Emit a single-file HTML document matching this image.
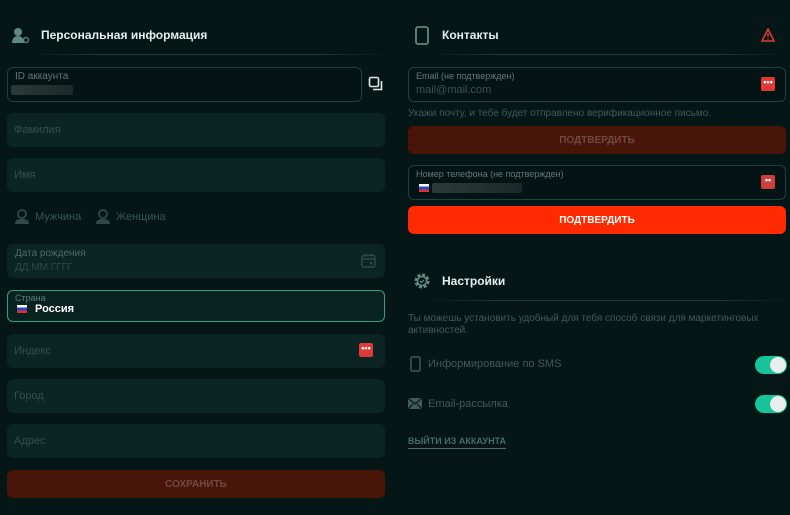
<!DOCTYPE html>
<html><head><meta charset="utf-8"><style>
*{box-sizing:border-box;margin:0;padding:0}
body{width:790px;height:515px;background:#051617;font-family:"Liberation Sans",sans-serif;position:relative;overflow:hidden;color:#5d7a76}
.a{position:absolute}
.f{position:absolute;background:#0a2523;border-radius:6px;font-size:11px;color:#34504c;padding-left:7px;display:flex;align-items:center}
.o{position:absolute;border:1px solid #23403c;border-radius:6px;background:#041313}
.lbl{position:absolute;font-size:10px;color:#5f7c78}
.h{position:absolute;font-size:12px;font-weight:bold;color:#e4efed}
.div{position:absolute;height:1px;background:linear-gradient(90deg,transparent,#223a38 20%,#223a38 80%,transparent)}
.btn{position:absolute;border-radius:6px;font-size:10px;font-weight:bold;display:flex;align-items:center;justify-content:center}
.dots{position:absolute;width:14px;height:14px;background:#e03a36;border-radius:2px;color:#fff;font-size:9px;line-height:10px;text-align:center;font-weight:bold}
.blur{position:absolute;height:10px;background:linear-gradient(90deg,#2a3b3a,#1a2a29);border-radius:2px}
.flag{position:absolute;width:10px;height:8px;background:linear-gradient(#fff 0 33%,#2449c8 33% 66%,#e0302a 66%)}
.tg{position:absolute;width:32px;height:18px;border-radius:9px;background:#17c49a}
.tg:after{content:"";position:absolute;right:1px;top:1px;width:16px;height:16px;border-radius:50%;background:#e8eeee}
</style></head><body>
<!-- left header -->
<svg class="a" style="left:11px;top:26px" width="20" height="20" viewBox="0 0 20 20"><circle cx="7" cy="6" r="4" fill="#5e8a80"/><path d="M1 17c0-5 3-7 6-7s6 2 6 7z" fill="#5e8a80"/><circle cx="15" cy="14" r="2.5" fill="none" stroke="#5e8a80" stroke-width="1.3"/></svg>
<div class="h" style="left:41px;top:28px">Персональная информация</div>
<div class="div" style="left:30px;top:54px;width:355px"></div>
<div class="o" style="left:7px;top:67px;width:355px;height:35px"></div>
<div class="lbl" style="left:15px;top:71px">ID аккаунта</div>
<div class="blur" style="left:11px;top:85px;width:62px"></div>
<svg class="a" style="left:368px;top:76px" width="16" height="16" viewBox="0 0 16 16"><rect x="1.5" y="1.5" width="9" height="9" rx="1.5" fill="none" stroke="#dfe8e6" stroke-width="1.6"/><path d="M13.5 5v8.5H5" fill="none" stroke="#dfe8e6" stroke-width="1.6"/></svg>
<div class="f" style="left:7px;top:113px;width:378px;height:34px">Фамилия</div>
<div class="f" style="left:7px;top:158px;width:378px;height:34px">Имя</div>
<svg class="a" style="left:15px;top:209px" width="14" height="15" viewBox="0 0 14 15"><circle cx="7" cy="5" r="4" fill="none" stroke="#2f4b47" stroke-width="1.8"/><path d="M0 15c0-4 3-5 7-5s7 1 7 5z" fill="#2f4b47"/></svg>
<div class="a" style="left:35px;top:211px;font-size:11px;color:#3a5652">Мужчина</div>
<svg class="a" style="left:96px;top:209px" width="14" height="15" viewBox="0 0 14 15"><circle cx="7" cy="5" r="4" fill="none" stroke="#2f4b47" stroke-width="1.8"/><path d="M0 15c0-4 3-5 7-5s7 1 7 5z" fill="#2f4b47"/></svg>
<div class="a" style="left:116px;top:211px;font-size:11px;color:#3a5652">Женщина</div>
<div class="f" style="left:7px;top:244px;width:378px;height:34px"></div>
<div class="lbl" style="left:15px;top:248px;color:#4d6a66">Дата рождения</div>
<div class="lbl" style="left:15px;top:262px;color:#2e4a46">ДД.ММ.ГГГГ</div>
<svg class="a" style="left:361px;top:253px" width="15" height="15" viewBox="0 0 15 15"><rect x="1" y="2.5" width="13" height="11.5" rx="1.5" fill="none" stroke="#2f4b47" stroke-width="1.4"/><path d="M1 6h13M4.5 0.5v3M10.5 0.5v3" stroke="#2f4b47" stroke-width="1.4"/><rect x="9" y="9" width="2.5" height="2.5" fill="#2f4b47"/></svg>
<div class="a" style="left:7px;top:290px;width:378px;height:32px;border:1.5px solid #3a9c80;border-radius:6px;background:#082220"></div>
<div class="lbl" style="left:15px;top:293px;font-size:9px">Страна</div>
<div class="flag" style="left:17px;top:305px"></div>
<div class="a" style="left:35px;top:303px;font-size:11px;font-weight:bold;color:#fff">Россия</div>
<div class="f" style="left:7px;top:334px;width:378px;height:34px">Индекс</div>
<div class="dots" style="left:359px;top:343px">•••</div>
<div class="f" style="left:7px;top:379px;width:378px;height:34px">Город</div>
<div class="f" style="left:7px;top:424px;width:378px;height:34px">Адрес</div>
<div class="btn" style="left:7px;top:470px;width:378px;height:28px;background:#4a1509;color:#6e4b42">СОХРАНИТЬ</div>
<!-- right -->
<svg class="a" style="left:415px;top:26px" width="14" height="19" viewBox="0 0 14 19"><rect x="1" y="1" width="12" height="17" rx="2" fill="none" stroke="#5e8a80" stroke-width="1.8"/></svg>
<div class="h" style="left:442px;top:28px">Контакты</div>
<svg class="a" style="left:761px;top:28px" width="14" height="14" viewBox="0 0 14 14"><path d="M7 1L13 13H1z" fill="none" stroke="#e03a36" stroke-width="1.6"/><path d="M7 5v4M7 10.5v1" stroke="#e03a36" stroke-width="1.5"/></svg>
<div class="div" style="left:430px;top:54px;width:356px"></div>
<div class="o" style="left:408px;top:67px;width:378px;height:35px"></div>
<div class="lbl" style="left:416px;top:71px;font-size:9px">Email (не подтвержден)</div>
<div class="a" style="left:416px;top:84px;font-size:11px;color:#3a5652">mail@mail.com</div>
<div class="dots" style="left:761px;top:77px">•••</div>
<div class="a" style="left:408px;top:108px;font-size:10px;color:#3f5c58">Укажи почту, и тебе будет отправлено верификационное письмо.</div>
<div class="btn" style="left:408px;top:126px;width:378px;height:28px;background:#4a1509;color:#6e4b42">ПОДТВЕРДИТЬ</div>
<div class="o" style="left:408px;top:165px;width:378px;height:35px"></div>
<div class="lbl" style="left:416px;top:169px;font-size:9px">Номер телефона (не подтвержден)</div>
<div class="flag" style="left:419px;top:184px"></div>
<div class="blur" style="left:432px;top:183px;width:90px"></div>
<div class="dots" style="left:761px;top:175px;background:#c9403a">••</div>
<div class="btn" style="left:408px;top:206px;width:378px;height:28px;background:#ff2a00;color:#fff">ПОДТВЕРДИТЬ</div>
<svg class="a" style="left:413px;top:272px" width="18" height="18" viewBox="0 0 18 18"><circle cx="9" cy="9" r="6" fill="none" stroke="#5e8a80" stroke-width="3" stroke-dasharray="3 1.7"/><circle cx="9" cy="9" r="4.5" fill="none" stroke="#5e8a80" stroke-width="1.5"/><path d="M7 9l1.5 1.5L11 8" fill="none" stroke="#5e8a80" stroke-width="1.2"/></svg>
<div class="h" style="left:442px;top:274px">Настройки</div>
<div class="div" style="left:430px;top:300px;width:356px"></div>
<div class="a" style="left:408px;top:313px;font-size:10px;line-height:12px;color:#3f5c58;width:370px">Ты можешь установить удобный для тебя способ связи для маркетинговых активностей.</div>
<svg class="a" style="left:410px;top:356px" width="11" height="16" viewBox="0 0 11 16"><rect x="1" y="1" width="9" height="14" rx="1.5" fill="none" stroke="#3f5c58" stroke-width="1.5"/></svg>
<div class="a" style="left:428px;top:358px;font-size:11px;color:#3f5c58">Информирование по SMS</div>
<div class="tg" style="left:755px;top:356px"></div>
<svg class="a" style="left:408px;top:398px" width="14" height="11" viewBox="0 0 14 11"><rect width="14" height="11" fill="#3f5c58"/><path d="M0 0l7 6 7-6M0 11l5-5M14 11l-5-5" fill="none" stroke="#051617" stroke-width="1.2"/></svg>
<div class="a" style="left:428px;top:398px;font-size:11px;color:#3f5c58">Email-рассылка</div>
<div class="tg" style="left:755px;top:395px"></div>
<div class="a" style="left:408px;top:436px;font-size:9px;font-weight:bold;color:#4d6a66;border-bottom:1px solid #4d6a66;padding-bottom:2px">ВЫЙТИ ИЗ АККАУНТА</div>
</body></html>
